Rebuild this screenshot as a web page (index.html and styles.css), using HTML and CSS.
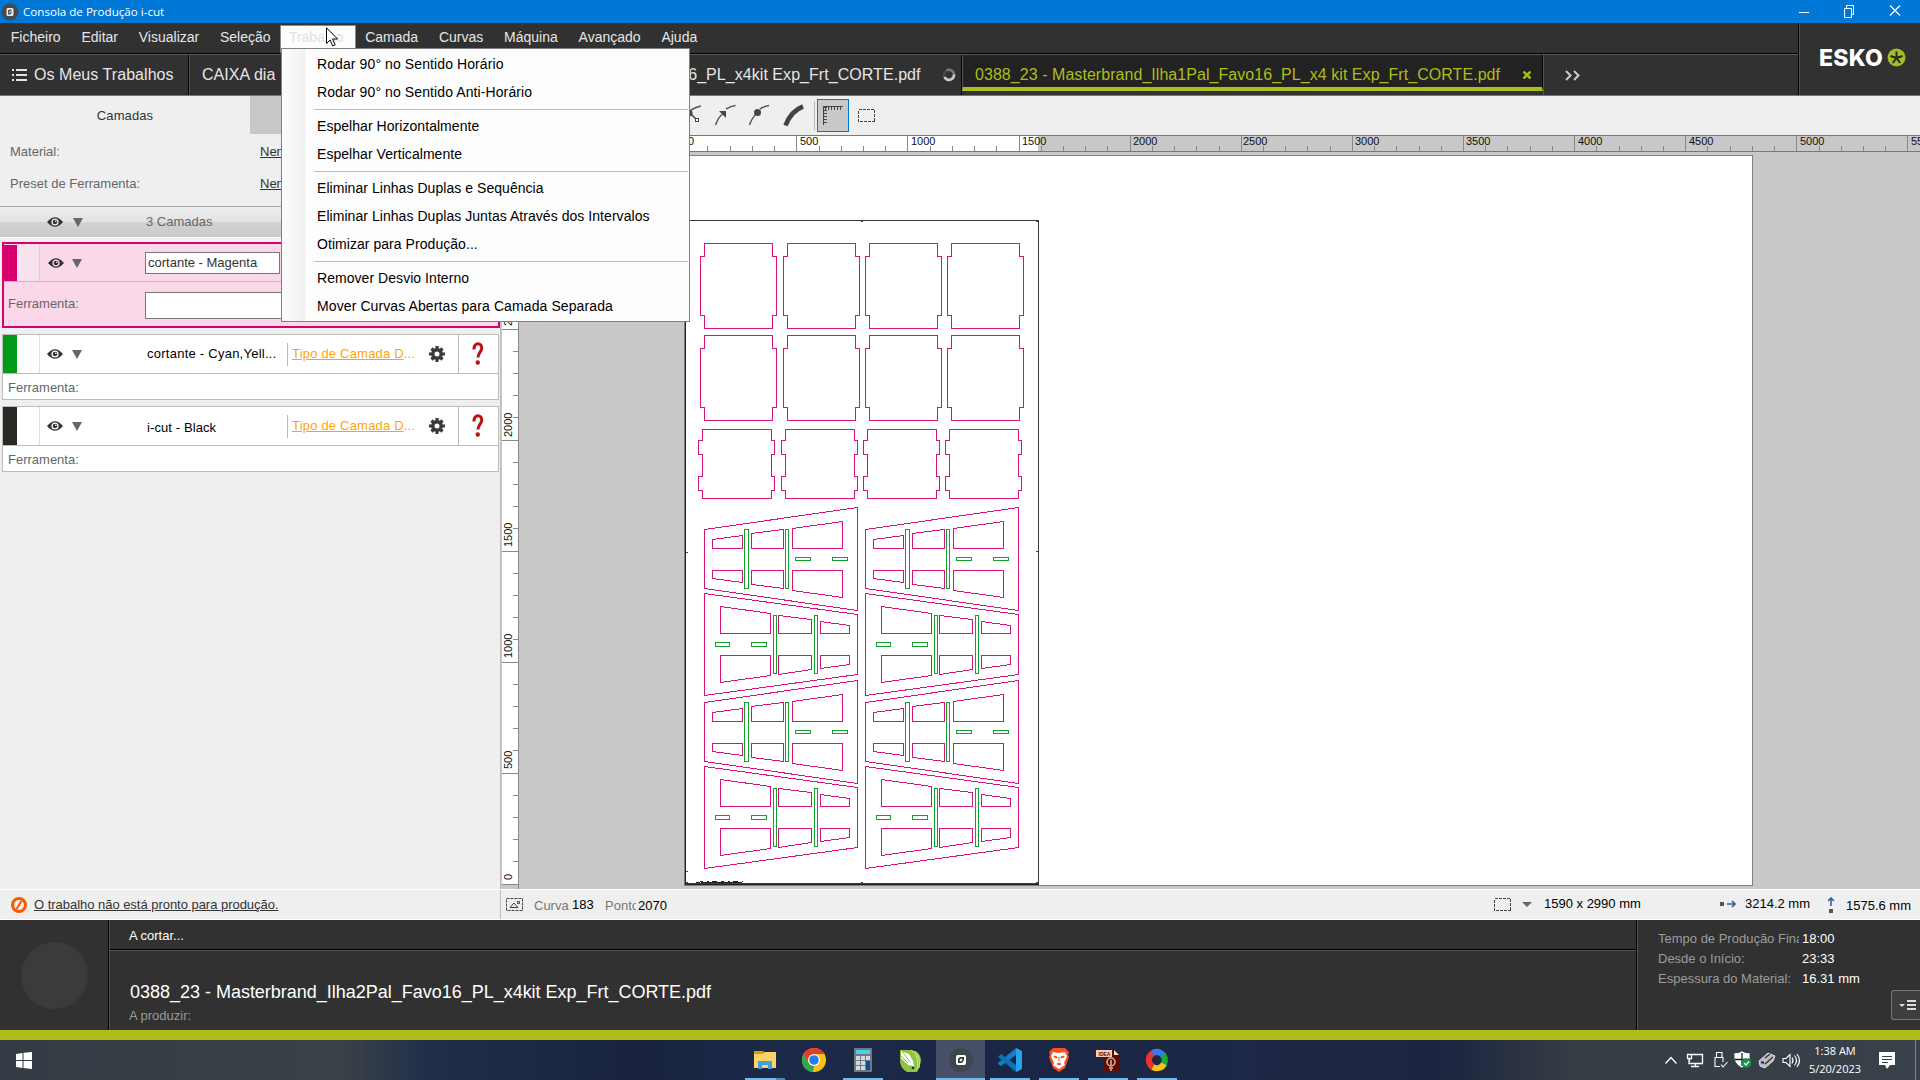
FILE: index.html
```html
<!DOCTYPE html>
<html lang="pt">
<head>
<meta charset="utf-8">
<title>Consola de Produção i-cut</title>
<link rel="stylesheet" href="styles.css">
</head>
<body>
<div class="app">

<header class="titlebar">
  <svg class="titlebar-icon" width="18" height="18" viewBox="0 0 18 18"><circle cx="9" cy="9" r="8.5" fill="#434a50"/><rect x="5.5" y="5" width="7" height="8" rx="1.5" fill="#eee"/><path d="M7 7.500l1.500-1h2v3.500l-1.500 1.500h-2z" fill="#434a50"/><path d="M8 10l2-2.500" stroke="#fff"/></svg>
  <span class="titlebar-text">Consola de Produção i-cut</span>
  <svg class="window-buttons" width="116" height="23" viewBox="1804 0 116 23" fill="none" stroke="#fff"><path d="M1799 12.500h10"/><path d="M1844.500 8.500h7v9h-7zM1846.500 8.500v-3h7v9h-2" /><path d="M1890 5.500l10 10M1900 5.500l-10 10" stroke-width="1.200"/></svg>
</header>

<div class="top">
  <div class="top-left">
    <nav class="menubar">
      <span class="menu">Ficheiro</span><span class="menu">Editar</span><span class="menu">Visualizar</span><span class="menu">Seleção</span><span class="menu menu-open">Trabalho</span><span class="menu menu-next">Camada</span><span class="menu">Curvas</span><span class="menu">Máquina</span><span class="menu">Avançado</span><span class="menu">Ajuda</span>
    </nav>
    <div class="tabs">
      <div class="tab tab-jobs">
        <svg width="15" height="14" viewBox="0 0 15 14" fill="#e4e4e4"><path d="M0 1h2v2H0zM4 1h11v2H4zM0 6h2v2H0zM4 6h11v2H4zM0 11h2v2H0zM4 11h11v2H4z"/></svg>
        <span>Os Meus Trabalhos</span>
      </div>
      <div class="tab tab-box"><span>CAIXA dia</span></div>
      <div class="tab tab-job">
        <span>0388_23 - Masterbrand_Ilha2Pal_Favo16_PL_x4kit Exp_Frt_CORTE.pdf</span>
        <svg width="14" height="14" viewBox="0 0 14 14" fill="none" stroke-width="2.600"><path d="M2.500 9A5 5 0 0 1 4 3" stroke="#484848"/><path d="M4.500 2.500A5 5 0 0 1 12 7" stroke="#777"/><path d="M12 6.500a5 5 0 0 1-9.500 2.500" stroke="#ccc"/></svg>
      </div>
      <div class="tab tab-active">
        <span>0388_23 - Masterbrand_Ilha1Pal_Favo16_PL_x4 kit Exp_Frt_CORTE.pdf</span>
        <svg width="8" height="8" viewBox="0 0 8 8" stroke="#aebd1b" stroke-width="2.400"><path d="M.5.5l7 7M7.500.5l-7 7"/></svg>
      </div>
      <div class="tab tab-more">
        <svg width="15" height="11" viewBox="0 0 15 11" fill="none" stroke="#ccc" stroke-width="2"><path d="M1 1l4.500 4.500L1 10M9 1l4.500 4.500L9 10"/></svg>
      </div>
    </div>
  </div>
  <div class="brand">
    <span class="brand-name">ESKO</span>
    <svg width="19" height="19" viewBox="0 0 19 19"><circle cx="9.500" cy="9.500" r="9" fill="#a5bd2a"/><path d="M9.500 10V3.500M9.500 10L3.500 8M9.500 10l6-2M9.500 10l-3.700 5M9.500 10l3.700 5" stroke="#26291c" stroke-width="2"/></svg>
  </div>
</div>

<main class="main">
  <aside class="panel">
    <div class="panel-tabs"><div class="panel-tab">Camadas</div><div class="panel-tab panel-tab-off"></div></div>
    <div class="field"><span class="field-name">Material:</span><span class="field-link">Nenhum</span></div>
    <div class="field field-second"><span class="field-name">Preset de Ferramenta:</span><span class="field-link">Nenhum</span></div>
    <div class="layers-head">
      <svg class="eye" width="16" height="10" viewBox="0 0 16 10"><path d="M0 5Q8-4.500 16 5Q8 14.500 0 5z" fill="#333"/><circle cx="8" cy="5" r="3.600" fill="#eee"/><circle cx="8" cy="5" r="2.300" fill="#333"/><circle cx="8.700" cy="4.300" r=".8" fill="#eee"/></svg>
      <svg class="tri" width="10" height="9" viewBox="0 0 10 9"><path d="M0 0h10L5 9z" fill="#666"/></svg>
      <span class="layers-count">3 Camadas</span>
    </div>
    <section class="layer layer-selected">
      <div class="layer-row">
        <i class="swatch swatch-magenta"></i><i class="grip"></i>
        <svg class="eye" width="16" height="10" viewBox="0 0 16 10"><path d="M0 5Q8-4.500 16 5Q8 14.500 0 5z" fill="#333"/><circle cx="8" cy="5" r="3.600" fill="#fad8e9"/><circle cx="8" cy="5" r="2.300" fill="#333"/><circle cx="8.700" cy="4.300" r=".8" fill="#eee"/></svg>
        <svg class="tri" width="10" height="9" viewBox="0 0 10 9"><path d="M0 0h10L5 9z" fill="#666"/></svg>
        <span class="name-input">cortante - Magenta</span>
      </div>
      <div class="tool-row"><span>Ferramenta:</span><span class="tool-input"></span></div>
    </section>
    <section class="layer">
      <div class="layer-row">
        <i class="swatch swatch-green"></i><i class="grip"></i>
        <svg class="eye" width="16" height="10" viewBox="0 0 16 10"><path d="M0 5Q8-4.500 16 5Q8 14.500 0 5z" fill="#333"/><circle cx="8" cy="5" r="3.600" fill="#fff"/><circle cx="8" cy="5" r="2.300" fill="#333"/><circle cx="8.700" cy="4.300" r=".8" fill="#eee"/></svg>
        <svg class="tri" width="10" height="9" viewBox="0 0 10 9"><path d="M0 0h10L5 9z" fill="#666"/></svg>
        <span class="layer-name layer-name-long">cortante - Cyan,Yell...</span>
        <span class="layer-type"><u>Tipo de Camada D</u>...</span>
        <svg class="gear" width="16" height="16" viewBox="-8 -8 16 16"><circle r="4.200" fill="none" stroke="#3a3a3a" stroke-width="3.400"/><path d="M0-8v3M0 5v3M-8 0h3M5 0h3M-5.500-5.500l2 2M3.500 3.500l2 2M-5.500 5.500l2-2M3.500-3.500l2-2" stroke="#3a3a3a" stroke-width="3.200"/></svg>
        <span class="help"><svg width="12" height="24" viewBox="0 0 12 24"><path d="M2 7.500C1.500-.5 10.500.5 9.700 6.500C9.300 10 6.200 10.500 6 15.500" fill="none" stroke="#c01010" stroke-width="3"/><circle cx="5.800" cy="20.500" r="2.200" fill="#c01010"/></svg></span>
      </div>
      <div class="tool-row"><span>Ferramenta:</span></div>
    </section>
    <section class="layer">
      <div class="layer-row">
        <i class="swatch swatch-black"></i><i class="grip"></i>
        <svg class="eye" width="16" height="10" viewBox="0 0 16 10"><path d="M0 5Q8-4.500 16 5Q8 14.500 0 5z" fill="#333"/><circle cx="8" cy="5" r="3.600" fill="#fff"/><circle cx="8" cy="5" r="2.300" fill="#333"/><circle cx="8.700" cy="4.300" r=".8" fill="#eee"/></svg>
        <svg class="tri" width="10" height="9" viewBox="0 0 10 9"><path d="M0 0h10L5 9z" fill="#666"/></svg>
        <span class="layer-name layer-name-low">i-cut - Black</span>
        <span class="layer-type"><u>Tipo de Camada D</u>...</span>
        <svg class="gear" width="16" height="16" viewBox="-8 -8 16 16"><circle r="4.200" fill="none" stroke="#3a3a3a" stroke-width="3.400"/><path d="M0-8v3M0 5v3M-8 0h3M5 0h3M-5.500-5.500l2 2M3.500 3.500l2 2M-5.500 5.500l2-2M3.500-3.500l2-2" stroke="#3a3a3a" stroke-width="3.200"/></svg>
        <span class="help"><svg width="12" height="24" viewBox="0 0 12 24"><path d="M2 7.500C1.500-.5 10.500.5 9.700 6.500C9.300 10 6.200 10.500 6 15.500" fill="none" stroke="#c01010" stroke-width="3"/><circle cx="5.800" cy="20.500" r="2.200" fill="#c01010"/></svg></span>
      </div>
      <div class="tool-row"><span>Ferramenta:</span></div>
    </section>
  </aside>

  <div class="workspace">
    <div class="toolbar">
      <svg width="386" height="39" viewBox="501 96 386 39" fill="none" stroke="#555" stroke-width="1.500">
        <path d="M681 125q3-8 8-12M691 110q5-3 10-4"/><path d="M684 107l12 12" stroke="#444"/><circle cx="689" cy="113" r="3.500" fill="#444" stroke="none"/><rect x="695.500" y="118.500" width="3" height="3" fill="#fff" stroke="#444" stroke-width="1"/>
        <path d="M715.500 125q3-8 7-11M726 109q5-3 9.500-3.500"/><path d="M719 111h7v7z" fill="#444" stroke="none"/>
        <path d="M749.500 125q3-8 6-10M760 109q5-3 9-3.500"/><circle cx="757.500" cy="112.500" r="3.500" fill="#444" stroke="none"/>
        <path d="M785.500 125.500Q791 111 803 106.500" stroke="#444" stroke-width="4.600"/>
        <path d="M814.500 101v29" stroke="#bbb" stroke-width="1"/>
        <rect x="817.500" y="99.500" width="31" height="32" fill="#c9c9c9" stroke="#0078d7" stroke-width="1"/>
        <g shape-rendering="crispEdges" stroke="#444"><path d="M823.500 106v19M823 106.500h19.500" stroke-width="1"/><path d="M825 108.500h17.500" stroke-width="3" stroke-dasharray="1 2"/><path d="M825.500 107v18" stroke-width="3" stroke-dasharray="1 2"/>
        <rect x="858.500" y="109.500" width="16" height="12" stroke-width="1" stroke-dasharray="3 1"/></g>
      </svg>
    </div>
    <svg class="ruler-h" width="1419" height="17" viewBox="501 135 1419 17" shape-rendering="crispEdges">
      <path d="M501 135h1419v17H501z" fill="#c8c8c8"/><path d="M519 136h519v15H519z" fill="#fff"/>
      <path d="M501 135.500h1419M501 151.500h1419" stroke="#777"/>
      <path d="M685.200 148.500H1920" stroke="#888" stroke-width="5" stroke-dasharray="1 21.222"/>
      <path d="M685.200 143.500H1920" stroke="#888" stroke-width="15" stroke-dasharray="1 110.110"/>
      <g class="ruler-text"><text x="688" y="145">0</text><text x="800" y="145">500</text><text x="911" y="145">1000</text><text x="1022" y="145">1500</text><text x="1133" y="145">2000</text><text x="1243" y="145">2500</text><text x="1355" y="145">3000</text><text x="1466" y="145">3500</text><text x="1578" y="145">4000</text><text x="1689" y="145">4500</text><text x="1800" y="145">5000</text><text x="1911" y="145">5500</text></g>
    </svg>
    <div class="view">
      <svg class="ruler-v" width="18" height="737" viewBox="501 152 18 737" shape-rendering="crispEdges">
        <path d="M501 152h18v737h-18z" fill="#c8c8c8"/><path d="M502 220h16v664h-16z" fill="#fff"/>
        <path d="M518.500 152v737" stroke="#888"/>
        <path d="M515.500 884.500V152" stroke="#888" stroke-width="5" stroke-dasharray="1 21.200"/>
        <path d="M510 884.700V152" stroke="#888" stroke-width="16" stroke-dasharray="1 110"/>
        <g class="ruler-text"><text transform="translate(511.500 880)rotate(-90)">0</text><text transform="translate(511.500 769)rotate(-90)">500</text><text transform="translate(511.500 658)rotate(-90)">1000</text><text transform="translate(511.500 547)rotate(-90)">1500</text><text transform="translate(511.500 437)rotate(-90)">2000</text><text transform="translate(511.500 326)rotate(-90)">2500</text></g>
      </svg>
      <svg class="canvas" width="1401" height="737" viewBox="519 152 1401 737" shape-rendering="crispEdges" fill="none">
        <defs>
          <path id="panel-tall" d="M4 0h68v13h4v59h-4v13H4V72H0V13h4z"/>
          <path id="panel-short" d="M4 0h69v11h3v14h-3v22h3v14h-3v8H4V61H0V47h4V25H0V11h4z"/>
          <g id="divider-a">
            <path d="M0 22L153 0V103L0 81zM8 32L38 28V41H8zM8 63H38V75L8 71zM47 26L79 22V41H47zM47 63H79V81L47 77zM88 21L138 14V41H88zM88 63H138V90L88 83z" stroke="#d8147c"/>
            <path d="M40 22h4v59h-4zM81 22h3v59h-3zM91 50h15v3H91zM128 50h15v3h-15z" stroke="#14a02c"/>
          </g>
          <g id="divider-b">
            <path d="M0 0L153 21V81L0 102zM16 13L66 20V40H16zM16 62H66V82L16 89zM74 22L107 26V40H74zM74 62H107V76L74 81zM116 28L145 32V40H116zM116 62H145V71L116 75z" stroke="#d8147c"/>
            <path d="M69 22h3v58h-3zM110 22h3v58h-3zM11 49h14v4H11zM47 49h15v4H47z" stroke="#14a02c"/>
          </g>
        </defs>
        <path d="M519 152h1401v737H519z" fill="#c8c8c8"/>
        <path d="M684.500 155.500h1068v730h-1068z" fill="#fff" stroke="#808080"/>
        <path d="M685.500 220.500h353v663h-353z" stroke="#3c3c3c"/><path d="M685.500 220v664h353" stroke="#222"/>
        <g stroke="#d8147c">
          <use href="#panel-tall" x="700.500" y="243.500"/><use href="#panel-tall" x="783.500" y="243.500"/><use href="#panel-tall" x="865.500" y="243.500"/><use href="#panel-tall" x="947.500" y="243.500"/>
          <use href="#panel-tall" x="700.500" y="335.500"/><use href="#panel-tall" x="783.500" y="335.500"/><use href="#panel-tall" x="865.500" y="335.500"/><use href="#panel-tall" x="947.500" y="335.500"/>
          <use href="#panel-short" x="698.500" y="429.500"/><use href="#panel-short" x="781.500" y="429.500"/><use href="#panel-short" x="863.500" y="429.500"/><use href="#panel-short" x="945.500" y="429.500"/>
        </g>
        <use href="#divider-a" x="704.500" y="507.500"/><use href="#divider-a" x="865.500" y="507.500"/>
        <use href="#divider-b" x="704.500" y="593.500"/><use href="#divider-b" x="865.500" y="593.500"/>
        <use href="#divider-a" x="704.500" y="680.500"/><use href="#divider-a" x="865.500" y="680.500"/>
        <use href="#divider-b" x="704.500" y="766.500"/><use href="#divider-b" x="865.500" y="766.500"/>
        <path d="M861 221.500h2M1036 221.500h2M686 552.500h2M1036 551.500h2M686 871.500h2M861 882.500h2M686 882.500h2M1036 882.500h2" stroke="#444"/>
        <path d="M696 882.500h4M701 882.500h41" stroke="#222"/><path d="M700 881.500h43" stroke="#222" stroke-dasharray="3 4 2 3 5 4"/>
      </svg>
    </div>
  </div>
</main>

<div class="statusbar">
  <div class="status-left">
    <svg width="16" height="16" viewBox="0 0 16 16" fill="none" stroke="#f85a00" stroke-width="3"><circle cx="8" cy="8" r="6.500"/><path d="M5.500 12l5-8" stroke-width="2"/></svg>
    <span>O trabalho não está pronto para produção.</span>
  </div>
  <div class="status-right">
    <svg width="17" height="14" viewBox="0 0 17 14" fill="none" stroke="#444"><rect x=".5" y=".5" width="16" height="12" stroke-dasharray="3 1"/><path d="M4 9.500l4-4.500 4 4.500zM11.500 3.500h2v2h-2z"/></svg>
    <span class="stat-name stat-curve">Curvas:</span><span class="stat-value stat-value-curve">183</span>
    <span class="stat-name stat-point">Pontos:</span><span class="stat-value stat-value-point">2070</span>
    <svg class="stat-frame" width="17" height="13" viewBox="0 0 17 13" fill="none" stroke="#444" shape-rendering="crispEdges"><rect x=".5" y=".5" width="16" height="12" stroke-dasharray="3 1"/></svg>
    <svg class="stat-arrow" width="10" height="5" viewBox="0 0 10 5"><path d="M0 0h10L5 5z" fill="#666"/></svg>
    <span class="stat-size">1590 x 2990 mm</span>
    <svg class="stat-x" width="16" height="8" viewBox="0 0 16 8"><path d="M0 2h4v4H0z" fill="#555"/><path d="M7 4h8M12 1l3 3-3 3" fill="none" stroke="#2b64a4" stroke-width="1.600"/></svg>
    <span class="stat-w">3214.2 mm</span>
    <svg class="stat-y" width="8" height="16" viewBox="0 0 8 16"><path d="M2 12h4v4H2z" fill="#555"/><path d="M4 9V1M1 4l3-3 3 3" fill="none" stroke="#2b64a4" stroke-width="1.600"/></svg>
    <span class="stat-h">1575.6 mm</span>
  </div>
</div>

<footer class="production">
  <div class="machine"><div class="machine-dot"></div></div>
  <div class="job">
    <div class="job-state">A cortar...</div>
    <div class="job-body"><div class="job-title">0388_23 - Masterbrand_Ilha2Pal_Favo16_PL_x4kit Exp_Frt_CORTE.pdf</div><div class="job-sub">A produzir:</div></div>
  </div>
  <div class="times">
    <div class="time"><span class="time-name">Tempo de Produção Final:</span><span>18:00</span></div>
    <div class="time"><span class="time-name">Desde o Início:</span><span>23:33</span></div>
    <div class="time"><span class="time-name">Espessura do Material:</span><span>16.31 mm</span></div>
    <div class="times-button"><svg width="17" height="11" viewBox="0 0 17 11" fill="#ddd"><path d="M0 4h6L3 7zM8 0h9v2H8zM8 4h9v2H8zM8 8h9v2H8z"/></svg></div>
  </div>
</footer>

<div class="taskbar">
  <div class="start"><svg width="16" height="17" viewBox="0 0 16 17" fill="#fff"><path d="M0 2l6.500-1v7H0zM7.500.8L16 0v8H7.500zM0 9h6.500v7L0 15zM7.500 9H16v8l-8.500-.9z"/></svg></div>
  <div class="task task-multi"><svg width="24" height="24" viewBox="0 0 24 24"><path d="M1 3h9l2 2-2 3H1z" fill="#dd9a10"/><path d="M1 6h9l2-2h11v16H1z" fill="#fbd366"/><path d="M5 21v-8h14v8h-4v-4H9v4z" fill="#3f9fdf"/></svg></div>
  <div class="task task-idle"><svg width="24" height="24" viewBox="-12 -12 24 24"><circle r="12" fill="#fbc116"/><path d="M-10.400-6L-5.200 3L0 6L-1 12A12 12 0 0 1-10.400-6z" fill="#2da94f"/><path d="M-10.400-6A12 12 0 0 1 10.400-6H0L-5.200 3z" fill="#e33b2e"/><circle r="6" fill="#fff"/><circle r="4.800" fill="#2a7de8"/></svg></div>
  <div class="task"><svg width="24" height="24" viewBox="0 0 24 24"><rect x="3" width="18" height="24" rx="1" fill="#717982"/><path d="M5 2h14v4H5z" fill="#48d0f2"/><path d="M5 8h4v4H5zM10 8h4v4h-4zM15 8h4v4h-4zM5 13h4v4H5zM10 13h4v4h-4zM5 18h4v4H5zM10 18h4v4h-4z" fill="#d4dade"/><path d="M15 13h4v9h-4z" fill="#0c4c9c"/></svg></div>
  <div class="task task-idle task-corel"><svg width="24" height="24" viewBox="0 0 24 24"><path d="M2 2h12q9 2 9 11-1 6-4 11H9Q2 20 2 13z" fill="#8fc33e"/><path d="M13 2q9 6 6 20M17 3q6 7 4 17" fill="none" stroke="#cbe49b"/><path d="M3 3l8 3 4 7 1 5-6-1-7-7z" fill="#fff"/><path d="M4 3l8 11M3 8l7 7" stroke="#8fc33e"/><circle cx="15" cy="20" r="1.300" fill="#333"/></svg></div>
  <div class="task task-current"><svg width="24" height="24" viewBox="0 0 24 24"><circle cx="12" cy="12" r="12" fill="#3c474e"/><rect x="7" y="7" width="10" height="10" rx="2" fill="#fff"/><path d="M9 11l2-2h4v3l-2 3H9z" fill="#333"/><path d="M11 13l2-2" stroke="#fff" stroke-width="2"/></svg></div>
  <div class="task"><svg width="24" height="24" viewBox="0 0 24 24"><path d="M18 0v7L3 18l-3-2v-1z" fill="#1380c4"/><path d="M0 9l3-3 15 11v7z" fill="#0c71b8"/><path d="M18 0l6 3v18l-6 3z" fill="#27a4ee"/></svg></div>
  <div class="task"><svg width="24" height="24" viewBox="0 0 24 24"><path d="M6 0h12l4 4-1 3 1 2-4 11-6 4-6-4L2 9l1-2-1-3z" fill="#fb4d21"/><path d="M6 4l6 1 6-1 2 4-3 7 1 2-6 4-6-4 1-2-3-7z" fill="#fff"/><path d="M7 8l3 1v1l-3-1zM17 8l-3 1v1l3-1zM10 16l2-1 2 1-2 1zM12 9v4" fill="#fb4d21" stroke="#fb4d21"/></svg></div>
  <div class="task"><svg width="24" height="24" viewBox="0 0 24 24"><path d="M8 2h11l5 5v16H8z" fill="#5c0d08"/><path d="M18 2l5 5h-5z" fill="#fbe3cb"/><rect x="0" y="2" width="16" height="7" fill="#f4cfb4"/><text x="2.500" y="7.800" class="idea">IDEA</text><circle cx="15" cy="14" r="4" fill="none" stroke="#e9b69c" stroke-width="1.500"/><path d="M15 12v5M13 20h4M14 22h2" stroke="#e9b69c" stroke-width="1.500"/></svg></div>
  <div class="task"><svg width="24" height="24" viewBox="-12 -12 24 24" fill="none" stroke-width="6"><path d="M-8 1A8 8 0 0 1 3-7.500" stroke="#e53935"/><path d="M-4-7A8 8 0 0 1 7.500-2" stroke="#2f7cf0"/><path d="M5.500-5.500A8 8 0 0 1 4 7" stroke="#1fa83c"/><path d="M7 4A8 8 0 0 1-6 5.500" stroke="#fcc414"/><path d="M-4 7A8 8 0 0 1-7-4" stroke="#e8352c"/></svg></div>
  <div class="tray">
    <svg width="140" height="24" viewBox="1664 1048 140 24" fill="none" stroke="#fff" stroke-width="1.300">
      <path d="M1665.500 1063.500l5.500-6 5.500 6"/>
      <path d="M1691.500 1054.500h11v9h-13.500v-4M1695.500 1063.500v3M1691 1066.500h8M1687.500 1054.500h4v4h-4zM1689.500 1058.500v3"/>
      <path d="M1716.500 1057v-4.500h5.500v4.500M1723 1062v-4.500h-8v9h5M1721 1064.500l2 2.500 4.500-5" stroke-width="1.100"/>
      <path d="M1735 1054q4 0 7-2 3 2 7 2 1 9-7 13-8-4-7-13z" fill="#fff" stroke="#fff"/><path d="M1742 1053v13M1735 1059.500h14" stroke="#222"/><circle cx="1746.500" cy="1063" r="4.800" fill="#13934a" stroke="none"/><path d="M1744 1063l2 2 3-3.500" stroke-width="1.200"/>
      <path d="M1759 1061l9-8 7 3-2 5-8 7-5-2z" fill="#bbb" stroke="#ddd" stroke-width="1"/><path d="M1765 1058l5-4M1765 1064l8-7" stroke="#333"/><path d="M1761 1062l3 1" stroke="#12c" stroke-width="2"/>
      <path d="M1783 1058.500h3l4-4v12l-4-4h-3zM1792 1057.500q2 3 0 6M1794.500 1055.500q4 5 0 10M1797 1054q5 6.500 0 13" stroke-width="1.100"/>
    </svg>
    <div class="clock"><span>1:38 AM</span><span>5/20/2023</span></div>
    <svg class="note" width="16" height="17" viewBox="0 0 16 17"><path d="M0 0h16v13h-5l-3 4-2-4H0z" fill="#fff"/><path d="M3 4.500h10M3 7.500h10M3 10.500h6" stroke="#39414a"/></svg>
    <i class="peek"></i>
  </div>
</div>

<div class="dropdown">
  <div class="item">Rodar 90° no Sentido Horário</div>
  <div class="item">Rodar 90° no Sentido Anti-Horário</div>
  <hr class="rule">
  <div class="item item-tight">Espelhar Horizontalmente</div>
  <div class="item item-tight">Espelhar Verticalmente</div>
  <hr class="rule">
  <div class="item item-tight">Eliminar Linhas Duplas e Sequência</div>
  <div class="item item-tight">Eliminar Linhas Duplas Juntas Através dos Intervalos</div>
  <div class="item item-tight">Otimizar para Produção...</div>
  <hr class="rule">
  <div class="item item-tight">Remover Desvio Interno</div>
  <div class="item">Mover Curvas Abertas para Camada Separada</div>
</div>
<svg class="pointer" width="12" height="20" viewBox="0 0 12 20"><path d="M.5.8v15.700l3.600-3.500 2.600 5.900 2.500-1.100-2.600-5.800h4.900z" fill="#fff" stroke="#000"/></svg>
</div>
</body>
</html>
```

FILE: styles.css
```css
* { box-sizing: border-box; }
body { margin: 0; width: 1920px; height: 1080px; overflow: hidden; font: 13px/16px "Liberation Sans", sans-serif; color: #000; }
svg { display: block; flex: none; }
.app { position: relative; display: flex; flex-direction: column; width: 1920px; height: 1080px; white-space: nowrap; }

.titlebar { height: 23px; background: #0078d7; display: flex; align-items: center; color: #fff; }
.titlebar-icon { margin-left: 1px; }
.titlebar-text { margin-left: 4px; font: 11.600px/20px "Open Sans", sans-serif; }
.window-buttons { margin-left: auto; overflow: visible; }

.top { display: flex; height: 73px; background: #313131; border-bottom: 1px solid #767676; color: #e6e6e6; }
.top-left { width: 1799px; border-right: 1px solid #000; }
.menubar { display: flex; height: 31px; padding-top: 2px; border-bottom: 1px solid #000; font-size: 14px; line-height: 24px; }
.menu { padding: 0 9.300px 0 10px; margin-left: 1.500px; }
.menu:first-child { margin-left: .8px; }
.menu-open { background: #fdfdfd; border: 1px solid #888; border-bottom: 0; line-height: 22px; color: #e2e2e2; padding: 0 8px; width: 76px; margin: 0; }
.menu-next { margin-left: -.7px; }
.tabs { display: flex; height: 41px; border-top: 1px solid #5a5a5a; font-size: 16px; line-height: 38px; letter-spacing: .05px; }
.tab { display: flex; align-items: center; border-right: 1px solid #000; border-left: 1px solid #555; }
.tab-jobs { width: 189px; border-left: 0; padding-left: 12px; gap: 7px; }
.tab-box { width: 199px; padding-left: 12px; }
.tab-job { width: 574px; padding-left: 11px; gap: 21px; }
.tab-active { width: 581px; height: 36px; background: #222; color: #aebd1b; border-bottom: 4px solid #aebd1b; padding-left: 12px; gap: 23px; padding-top: 8px; line-height: 20px; }
.tab-more { border-right: 0; padding-left: 21px; }
.brand { flex: 1; display: flex; border-left: 1px solid #555; padding: 25px 0 0 19px; }
.brand-name { width: 68px; font: 800 23px/20px Inter, sans-serif; letter-spacing: .3px; color: #fff; }

.main { display: flex; height: 793px; }
.panel { width: 501px; background: #efefef; border-right: 1px solid #bbb; }
.panel-tabs { display: flex; height: 38px; }
.panel-tab { width: 250px; line-height: 39px; text-align: center; color: #333; letter-spacing: .1px; }
.panel-tab-off { background: #c8c8c8; }
.field { display: flex; height: 32px; padding-left: 10px; align-items: center; color: #666; padding-top: 4px; }
.field-second { padding-top: 3px; }
.field-name { width: 250px; }
.field-link { color: #333; text-decoration: underline; }
.layers-head { display: flex; align-items: center; height: 32px; margin-top: 8px; padding-left: 47px; border-top: 1px solid #aaa; border-bottom: 1px solid #fff; background: linear-gradient(#eee, #e2e2e2 48%, #d2d2d2 52%, #cacaca); color: #666; }
.layers-head .tri { margin-left: 10px; }
.layers-count { margin-left: 63px; }
.layer { width: 497px; height: 66px; margin: 0 0 6px 2px; background: #fff; border: 1px solid #bbb; }
.layer-row { display: flex; align-items: center; height: 39px; border-bottom: 1px solid #bbb; }
.swatch { width: 14px; height: 100%; }
.swatch-magenta { background: #d8006f; width: 13px; }
.swatch-green { background: #009a17; }
.swatch-black { background: #282824; }
.grip { width: 23px; height: 100%; border-right: 1px solid #ddd; }
.layer .eye { margin-left: 7px; }
.layer .tri { margin-left: 9px; }
.layer-name { width: 136px; margin-left: 65px; margin-right: 4px; letter-spacing: .1px; }
.layer-name-long { letter-spacing: .25px; }
.layer-name-low { padding-top: 3px; }
.layer-type { width: 131px; height: 23px; line-height: 22px; border-left: 1px solid #bbb; padding-left: 4px; color: #ffa500; letter-spacing: .2px; }
.gear { margin-left: 11px; }
.help { width: 40px; height: 100%; margin-left: auto; border-left: 1px solid #bbb; display: flex; align-items: center; justify-content: center; padding-right: 1px; }
.tool-row { display: flex; padding: 6px 0 0 5px; color: #666; }
.layer-selected { height: 86px; margin-top: 4px; width: 498px; border: 2px solid #d8006f; background: #fad8e9; }
.layer-selected .eye { margin-left: 8px; }
.layer-selected .tri { margin-left: 8px; }
.layer-selected .grip { background: #f8e2ee; border-color: #dcc; }
.name-input { width: 135px; height: 22px; margin-left: 63px; padding-left: 2px; line-height: 20px; border: 1px solid #777; background: #fff; color: #333; }
.layer-selected .layer-row { height: 38px; padding-top: 1px; }
.layer-selected .tool-row { padding: 10px 0 0 4px; align-items: flex-start; line-height: 24px; }
.tool-input { width: 300px; height: 27px; margin-left: auto; margin-right: 53px; border: 1px solid #777; background: #fff; }

.workspace { width: 1419px; background: #efefef; }
.toolbar { height: 39px; }
.ruler-text { font-size: 11px; fill: #111; }
.view { display: flex; }

.statusbar { display: flex; height: 31px; border-top: 1px solid #fff; border-bottom: 1px solid #fff; background: #efefef; }
.status-left { display: flex; align-items: center; width: 501px; padding: 1px 0 0 11px; gap: 7px; border-right: 1px solid #bbb; text-decoration: underline; color: #333; letter-spacing: -.03px; }
.status-right { flex: 1; display: flex; align-items: center; padding-left: 5px; }
.stat-name { overflow: hidden; color: #777; padding-top: 2px; }
.stat-curve { width: 35px; margin-left: 11px; }
.stat-value-curve { width: 33px; margin-left: 3px; }
.stat-point { width: 31px; }
.stat-value-point { margin-left: 2px; padding-top: 2px; }
.stat-frame { margin-left: auto; }
.stat-arrow { margin-left: 11px; }
.stat-size { width: 176px; margin-left: 12px; padding-bottom: 2px; }
.stat-x { margin-bottom: 2px; }
.stat-w { width: 82px; margin-left: 9px; padding-bottom: 2px; }
.stat-h { width: 74px; margin-left: 11px; padding-top: 2px; }

.production { display: flex; height: 120px; background: #313131; border-bottom: 10px solid #aebd1b; color: #fff; }
.machine { width: 109px; border-right: 1px solid #000; display: flex; align-items: center; justify-content: center; padding-left: 1px; }
.machine-dot { width: 67px; height: 67px; border-radius: 50%; background: #3b3b3b; }
.job { width: 1528px; border-left: 1px solid #555; border-right: 1px solid #000; }
.job-state { height: 30px; border-bottom: 1px solid #000; line-height: 31px; padding-left: 19px; }
.job-body { border-top: 1px solid #555; padding: 30px 0 0 20px; }
.job-title { font-size: 18px; line-height: 22px; letter-spacing: -.015px; }
.job-sub { color: #999; line-height: 26px; margin-left: -1px; }
.times { flex: 1; border-left: 1px solid #555; padding: 9px 0 0 20px; display: flex; flex-direction: column; }
.time { display: flex; height: 20px; line-height: 20px; gap: 3px; }
.time-name { width: 141px; overflow: hidden; color: #9c9c9c; }
.times-button { align-self: flex-end; margin-top: 1px; width: 29px; height: 30px; border: 1px solid #777; border-right: 0; border-radius: 3px 0 0 3px; background: #3e3e3e; padding: 9px 0 0 7px; }

.taskbar { display: flex; height: 40px; background: linear-gradient(90deg, #333c44 0, #3a4248 340px, #202e49 430px, #18223f 640px, #1c2a47 780px, #1b2545 1050px, #1d2846 1250px, #1c2440 1440px, #343c44 1570px, #39424a 1920px); }
.start { width: 740px; padding: 12px 0 0 16px; }
.task { position: relative; width: 49px; height: 40px; padding-top: 8px; display: flex; justify-content: center; }
.task::after { content: ""; position: absolute; left: 5px; right: 4px; bottom: 0; height: 2px; background: #76b9ed; }
.task-idle::after { display: none; }
.task-multi::after { background: linear-gradient(90deg, #76b9ed 31px, #5787b5 31px); }
.task-corel { padding-right: 4px; }
.task-current { background: #485069; }
.task-current::after { left: 0; right: 0; }
.idea { font: bold 5px "Liberation Sans", sans-serif; fill: #5c0d08; }
.tray { margin-left: auto; display: flex; align-items: center; width: 256px; color: #fff; }
.clock { display: flex; flex-direction: column; width: 62px; text-align: center; font: 11px/18px "Open Sans", sans-serif; }
.note { margin-left: 13px; }
.peek { margin-left: auto; margin-right: 4px; width: 1px; height: 40px; background: #7b8288; }

.dropdown { position: absolute; left: 281px; top: 48px; width: 409px; height: 274px; padding: 2px 1px 0 31px; border: 1px solid #808080; background: linear-gradient(90deg, #fdfdfd 0, #f1f1f1 23px, #fdfdfd 24px); font-size: 14px; letter-spacing: .1px; }
.item { height: 28px; line-height: 27px; padding-left: 4px; }
.item-tight { letter-spacing: .05px; }
.rule { height: 1px; border: 0; margin: 2px 0 3px 1px; background: #bdbdbd; }
.pointer { position: absolute; left: 326px; top: 27px; }
```
